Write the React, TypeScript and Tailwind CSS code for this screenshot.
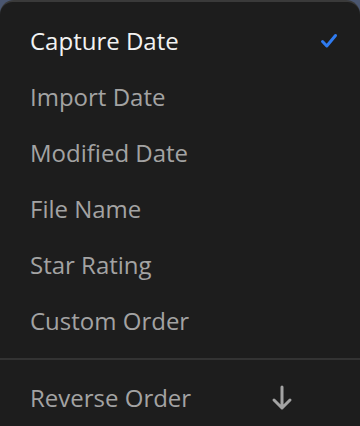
import React from 'react';

const ITEMS = ['Capture Date', 'Import Date', 'Modified Date', 'File Name', 'Star Rating', 'Custom Order'];

const App = () => {
  const selected = 'Capture Date';
  return (
    <div className="w-[360px] h-[426px] bg-[#4a5670] overflow-hidden" style={{ fontFamily: '"Open Sans", "Noto Sans", sans-serif' }}>
      <div className="h-full bg-[#3a3a3a] rounded-t-[14px] pt-[2px]">
        <div className="h-full bg-[#1d1d1d] rounded-t-[13px] pt-[11px]">
          {ITEMS.map(item => (
            <div key={item} className="h-[56px] flex items-center justify-between pl-[30px] pr-[22px]">
              <span className={`text-[24px] ${item === selected ? 'text-[#f2f2f2]' : 'text-[#a3a3a3]'}`}>{item}</span>
              {item === selected && (
                <svg width="18" height="16" viewBox="0 0 18 16" fill="none">
                  <path d="M2.5 8.5 L6.8 13 L15.5 2.5" stroke="#2f7bf0" strokeWidth="3" strokeLinecap="round" strokeLinejoin="round" />
                </svg>
              )}
            </div>
          ))}
          <div className="mt-[9px] h-[2px] bg-[#333333]" />
          <div className="h-[56px] mt-[10px] flex items-center pl-[30px]">
            <span className="text-[24px] text-[#a3a3a3] w-[241px]">Reverse Order</span>
            <svg width="22" height="26" viewBox="0 0 22 26" fill="none">
              <path d="M11 2 V23 M3 15 L11 23 L19 15" stroke="#a3a3a3" strokeWidth="3" strokeLinecap="round" strokeLinejoin="round" />
            </svg>
          </div>
        </div>
      </div>
    </div>
  );
};

export default App;
